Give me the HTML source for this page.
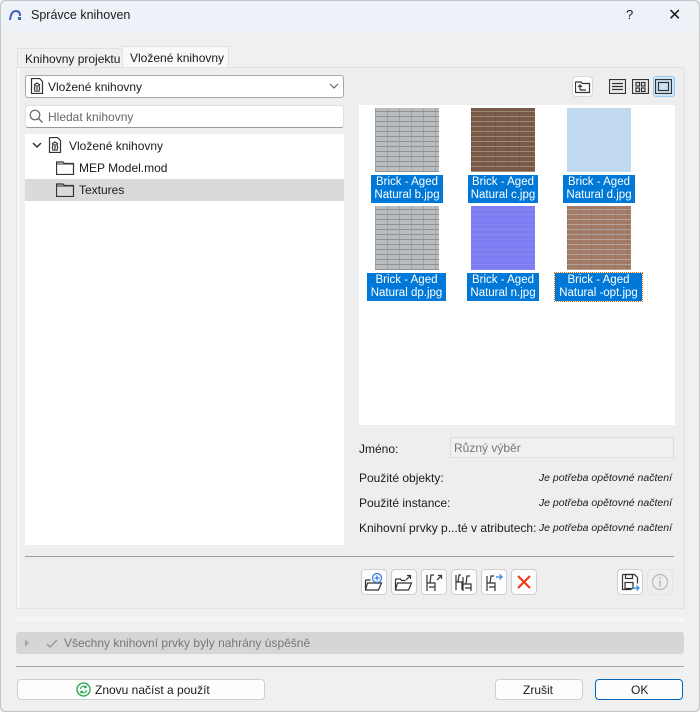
<!DOCTYPE html>
<html><head><meta charset="utf-8">
<style>
*{box-sizing:border-box;margin:0;padding:0}
body{width:700px;height:712px;overflow:hidden;background:#f0f0f0;font-family:"Segoe UI","Liberation Sans","DejaVu Sans",sans-serif;font-size:12px;color:#1a1a1a;position:relative}
.a{position:absolute}
.t{white-space:nowrap}
.btn{position:absolute;background:#fdfdfd;border:1px solid #cfcfcf;border-radius:4px}
.thumb{position:absolute;width:64px;height:64px}
.lbl{position:absolute;background:#0078d7;color:#fff;text-align:center;line-height:13px;font-size:11.5px;padding:1px 2px}
.gb{background-color:#b9bdbf;background-image:repeating-linear-gradient(0deg,#8e9294 0 1px,transparent 1px 5px),repeating-linear-gradient(90deg,#a0a4a6 0 1px,transparent 1px 12px)}
.rb{background-color:#7c5a48;background-image:repeating-linear-gradient(0deg,#9a8a7a 0 1px,transparent 1px 5px),repeating-linear-gradient(90deg,#6c5040 0 1px,transparent 1px 12px)}
.ob{background-color:#a47b66;background-image:repeating-linear-gradient(0deg,#b0a49a 0 1px,transparent 1px 5px),repeating-linear-gradient(90deg,#957060 0 1px,transparent 1px 12px)}
.nb{background-color:#7d7cf0;background-image:repeating-linear-gradient(0deg,#8786f4 0 1px,transparent 1px 5px)}
.ico{stroke:#333;fill:none;stroke-width:1.2}
.it{position:absolute;right:28px;font-style:italic;font-size:10.5px;white-space:nowrap}
</style></head><body>
<div class="a" style="left:0;top:0;width:700px;height:712px;border:1px solid #c4c4c4;border-radius:6px"></div>
<div class="a" style="left:1px;top:1px;width:698px;height:30px;background:#eef1f7;border-radius:6px 6px 0 0"></div>
<svg class="a" style="left:8px;top:9px" width="14" height="12"><path d="M2 11 Q3 2 8 2 Q12 2 12 7" stroke="#3b63b8" stroke-width="2" fill="none"/><rect x="10" y="8" width="3" height="3" fill="#3b63b8"/></svg>
<div class="a t" style="left:31px;top:8px;font-size:12.5px">Správce knihoven</div>
<div class="a t" style="left:626px;top:7px;font-size:13px">?</div>
<div class="a t" style="left:668px;top:5px;font-size:16px">✕</div>

<div class="a t" style="left:17px;top:48px;width:106px;height:20px;border:1px solid #e0e0e0;border-bottom:none;background:#f0f0f0;padding:3px 0 0 7px">Knihovny projektu</div>
<div class="a t" style="left:122px;top:46px;width:107px;height:22px;border:1px solid #e2e2e2;border-bottom:none;background:#f9f9f9;padding:4px 0 0 7px">Vložené knihovny</div>
<div class="a" style="left:16px;top:67px;width:669px;height:542px;border:1px solid #e3e3e3;background:#eeeeee"></div>
<div class="a" style="left:17px;top:68px;width:3px;height:540px;background:#f7f7f7"></div>

<div class="a" style="left:25px;top:75px;width:319px;height:23px;background:#fff;border:1px solid #a8a8a8;border-radius:3px"></div>
<svg class="a" style="left:30px;top:78px" width="14" height="16"><path d="M1.5 .5h8l3 3v12h-11z" class="ico"/><path d="M4 7l3-2 3 2M4 8h6M4.5 9v3M7 9v3M9.5 9v3M4 13h6" class="ico" stroke-width="1"/></svg>
<div class="a t" style="left:48px;top:80px">Vložené knihovny</div>
<svg class="a" style="left:329px;top:83px" width="10" height="6"><path d="M1 1l4 4 4-4" stroke="#555" fill="none"/></svg>
<div class="a" style="left:25px;top:105px;width:319px;height:23px;background:#fff;border:1px solid #e0e0e0;border-bottom:1px solid #999;border-radius:3px"></div>
<svg class="a" style="left:29px;top:109px" width="15" height="15"><circle cx="6" cy="6" r="4.8" stroke="#666" fill="none" stroke-width="1.2"/><path d="M9.5 9.5l4 4" stroke="#666" stroke-width="1.3"/></svg>
<div class="a t" style="left:48px;top:110px;color:#666">Hledat knihovny</div>
<div class="a" style="left:25px;top:134px;width:319px;height:411px;background:#fff"></div>
<div class="a" style="left:25px;top:179px;width:319px;height:22px;background:#dadada"></div>
<svg class="a" style="left:32px;top:142px" width="10" height="7"><path d="M1 1l4 4 4-4" stroke="#333" stroke-width="1.5" fill="none"/></svg>
<svg class="a" style="left:48px;top:137px" width="14" height="16"><path d="M1.5 .5h8l3 3v12h-11z" class="ico"/><path d="M4 7l3-2 3 2M4 8h6M4.5 9v3M7 9v3M9.5 9v3M4 13h6" class="ico" stroke-width="1"/></svg>
<div class="a t" style="left:69px;top:139px">Vložené knihovny</div>
<svg class="a" style="left:56px;top:160px" width="19" height="15"><path d="M.5 2.5v12h17v-11h-9l-1.5-1.5h-6.5z" class="ico" stroke-width="1"/><path d="M.5 4h17" stroke="#333" stroke-width="1"/></svg>
<div class="a t" style="left:79px;top:161px">MEP Model.mod</div>
<svg class="a" style="left:56px;top:182px" width="19" height="15"><path d="M.5 2.5v12h17v-11h-9l-1.5-1.5h-6.5z" class="ico" stroke-width="1"/><path d="M.5 4h17" stroke="#333" stroke-width="1"/></svg>
<div class="a t" style="left:79px;top:183px">Textures</div>

<div class="btn" style="left:572px;top:76px;width:21px;height:21px;border-color:#d8d8d8"></div>
<svg class="a" style="left:575px;top:79px" width="16" height="15"><path d="M.5 2.5v11h14v-9h-7l-1.5-1.5h-5.5z" class="ico" stroke-width="1"/><path d="M5 11V6M3 8l2-2 2 2M5 11h6" class="ico" stroke-width="1"/></svg>
<svg class="a" style="left:609px;top:79px" width="17" height="15"><rect x=".5" y=".5" width="16" height="14" class="ico"/><path d="M3 4.5h11M3 7.5h11M3 10.5h11" class="ico" stroke-width="1"/></svg>
<svg class="a" style="left:632px;top:79px" width="17" height="15"><rect x=".5" y=".5" width="16" height="14" class="ico"/><rect x="4" y="3.5" width="3.5" height="3.5" class="ico" stroke-width="1"/><rect x="9.5" y="3.5" width="3.5" height="3.5" class="ico" stroke-width="1"/><rect x="4" y="9" width="3.5" height="3.5" class="ico" stroke-width="1"/><rect x="9.5" y="9" width="3.5" height="3.5" class="ico" stroke-width="1"/></svg>
<div class="a" style="left:653px;top:76px;width:22px;height:21px;background:#cce4f7;border:1px solid #99c9ef;border-radius:3px"></div>
<svg class="a" style="left:655px;top:79px" width="17" height="15"><rect x=".5" y=".5" width="16" height="14" class="ico"/><rect x="3.5" y="3.5" width="10" height="8" class="ico" stroke-width="1"/></svg>

<div class="a" style="left:359px;top:105px;width:316px;height:320px;background:#fff"></div>
<div class="thumb gb" style="left:375px;top:108px"></div>
<div class="thumb rb" style="left:471px;top:108px"></div>
<div class="thumb" style="left:567px;top:108px;background:#c0d9ee"></div>
<div class="thumb gb" style="left:375px;top:206px"></div>
<div class="thumb nb" style="left:471px;top:206px"></div>
<div class="thumb ob" style="left:567px;top:206px"></div>
<div class="lbl t" style="left:371px;top:175px;width:72px">Brick - Aged<br>Natural b.jpg</div>
<div class="lbl t" style="left:468px;top:175px;width:70px">Brick - Aged<br>Natural c.jpg</div>
<div class="lbl t" style="left:563px;top:175px;width:72px">Brick - Aged<br>Natural d.jpg</div>
<div class="lbl t" style="left:367px;top:273px;width:79px">Brick - Aged<br>Natural dp.jpg</div>
<div class="lbl t" style="left:467px;top:273px;width:72px">Brick - Aged<br>Natural n.jpg</div>
<div class="lbl t" style="left:555px;top:273px;width:87px;outline:1px dotted #e07000">Brick - Aged<br>Natural -opt.jpg</div>

<div class="a t" style="left:359px;top:442px">Jméno:</div>
<div class="a" style="left:450px;top:437px;width:224px;height:21px;border:1px solid #dcdcdc;background:#f0f0f0"></div>
<div class="a t" style="left:454px;top:441px;color:#777">Různý výběr</div>
<div class="a t" style="left:359px;top:471px">Použité objekty:</div>
<div class="a t" style="left:359px;top:496px">Použité instance:</div>
<div class="a t" style="left:359px;top:521px">Knihovní prvky p...té v atributech:</div>
<div class="it" style="top:472px">Je potřeba opětovné načtení</div>
<div class="it" style="top:497px">Je potřeba opětovné načtení</div>
<div class="it" style="top:522px">Je potřeba opětovné načtení</div>

<div class="a" style="left:25px;top:556px;width:649px;height:1px;background:#9a9a9a"></div>

<div class="btn" style="left:361px;top:569px;width:26px;height:26px"></div>
<div class="btn" style="left:391px;top:569px;width:26px;height:26px"></div>
<div class="btn" style="left:421px;top:569px;width:26px;height:26px"></div>
<div class="btn" style="left:451px;top:569px;width:26px;height:26px"></div>
<div class="btn" style="left:481px;top:569px;width:26px;height:26px"></div>
<div class="btn" style="left:511px;top:569px;width:26px;height:26px"></div>
<div class="btn" style="left:617px;top:569px;width:26px;height:26px"></div>
<div class="a" style="left:647px;top:569px;width:26px;height:26px;border:1px solid #e6e6e6;border-radius:4px"></div>
<svg class="a" style="left:364px;top:572px" width="20" height="20"><path d="M1.5 8v10h13l3-7h-14l-2 7M1.5 8h5" class="ico" stroke-width="1"/><circle cx="13" cy="6" r="4.5" stroke="#2b7de0" fill="none" stroke-width="1.2"/><path d="M13 3.5v5M10.5 6h5" stroke="#2b7de0" stroke-width="1.2"/></svg>
<svg class="a" style="left:394px;top:572px" width="20" height="20"><path d="M1.5 7v11h13l3-7h-14l-2 7M1.5 7h5l1 1.5h4" class="ico" stroke-width="1"/><path d="M12 8l4-4M13 3.5h3.5V7" class="ico" stroke-width="1"/></svg>
<svg class="a" style="left:424px;top:572px" width="20" height="20"><path d="M3 3v16M3 11h8v8M6 11l1-8h3M5 15h6" class="ico" stroke-width="1"/><path d="M13 8l4-4M14 3.5h3.5V7" class="ico" stroke-width="1"/></svg>
<svg class="a" style="left:454px;top:572px" width="20" height="20"><path d="M2 3v15M2 10h6v8M4 10l1-7h2M9 5v14M9 12h8v7M12 12l1-8h3M11 16h6" class="ico" stroke-width="1"/></svg>
<svg class="a" style="left:484px;top:572px" width="20" height="20"><path d="M3 4v15M3 11h8v8M6 11l1-7h3M5 15h6" class="ico" stroke-width="1"/><path d="M12 5h6M15.5 2.5l2.5 2.5-2.5 2.5" stroke="#2b7de0" fill="none" stroke-width="1.2"/></svg>
<svg class="a" style="left:516px;top:574px" width="16" height="16"><path d="M2 2l12 12M14 2L2 14" stroke="#f03a17" stroke-width="2.2"/></svg>
<svg class="a" style="left:620px;top:572px" width="20" height="20"><path d="M2.5 2.5h12l3 3v6M2.5 2.5v15h9" class="ico" stroke-width="1.1"/><rect x="5.5" y="2.5" width="7" height="4" class="ico" stroke-width="1"/><rect x="5" y="10.5" width="8" height="6" class="ico" stroke-width="1"/><path d="M12 16h7M16.5 13.5l2.5 2.5-2.5 2.5" stroke="#2b7de0" fill="none" stroke-width="1.2"/></svg>
<svg class="a" style="left:651px;top:573px" width="18" height="18"><circle cx="9" cy="9" r="7.5" stroke="#bbb" fill="none" stroke-width="1.2"/><path d="M9 7.5v6" stroke="#bbb" stroke-width="1.6"/><circle cx="9" cy="5" r="1" fill="#bbb"/></svg>

<div class="a" style="left:16px;top:617px;width:668px;height:5px;background:#f6f6f6"></div>
<div class="a" style="left:16px;top:632px;width:668px;height:22px;background:#d6d6d6;border-radius:3px"></div>
<svg class="a" style="left:25px;top:639px" width="5" height="8"><path d="M0 0l4 4-4 4z" fill="#aaa"/></svg>
<svg class="a" style="left:46px;top:639px" width="12" height="10"><path d="M1 5l3 3 7-7" stroke="#999" stroke-width="1.5" fill="none"/></svg>
<div class="a t" style="left:64px;top:636px;color:#777">Všechny knihovní prvky byly nahrány úspěšně</div>
<div class="a" style="left:16px;top:666px;width:668px;height:1px;background:#a8a8a8"></div>

<div class="btn" style="left:17px;top:679px;width:248px;height:21px"></div>
<svg class="a" style="left:76px;top:682px" width="15" height="15"><circle cx="7.5" cy="7.5" r="6.5" stroke="#1ea446" fill="none" stroke-width="1.3"/><path d="M4.5 7a3 3 0 0 1 5.5-1.5M10.5 8a3 3 0 0 1-5.5 1.5M10 3.5v2.2H7.8M5 11.5V9.3h2.2" stroke="#1ea446" fill="none" stroke-width="1.1"/></svg>
<div class="a t" style="left:95px;top:683px">Znovu načíst a použít</div>
<div class="btn" style="left:495px;top:679px;width:88px;height:21px"></div>
<div class="a t" style="left:523px;top:683px">Zrušit</div>
<div class="btn" style="left:595px;top:679px;width:88px;height:21px;border:1px solid #0067c0"></div>
<div class="a t" style="left:631px;top:683px">OK</div>
</body></html>
